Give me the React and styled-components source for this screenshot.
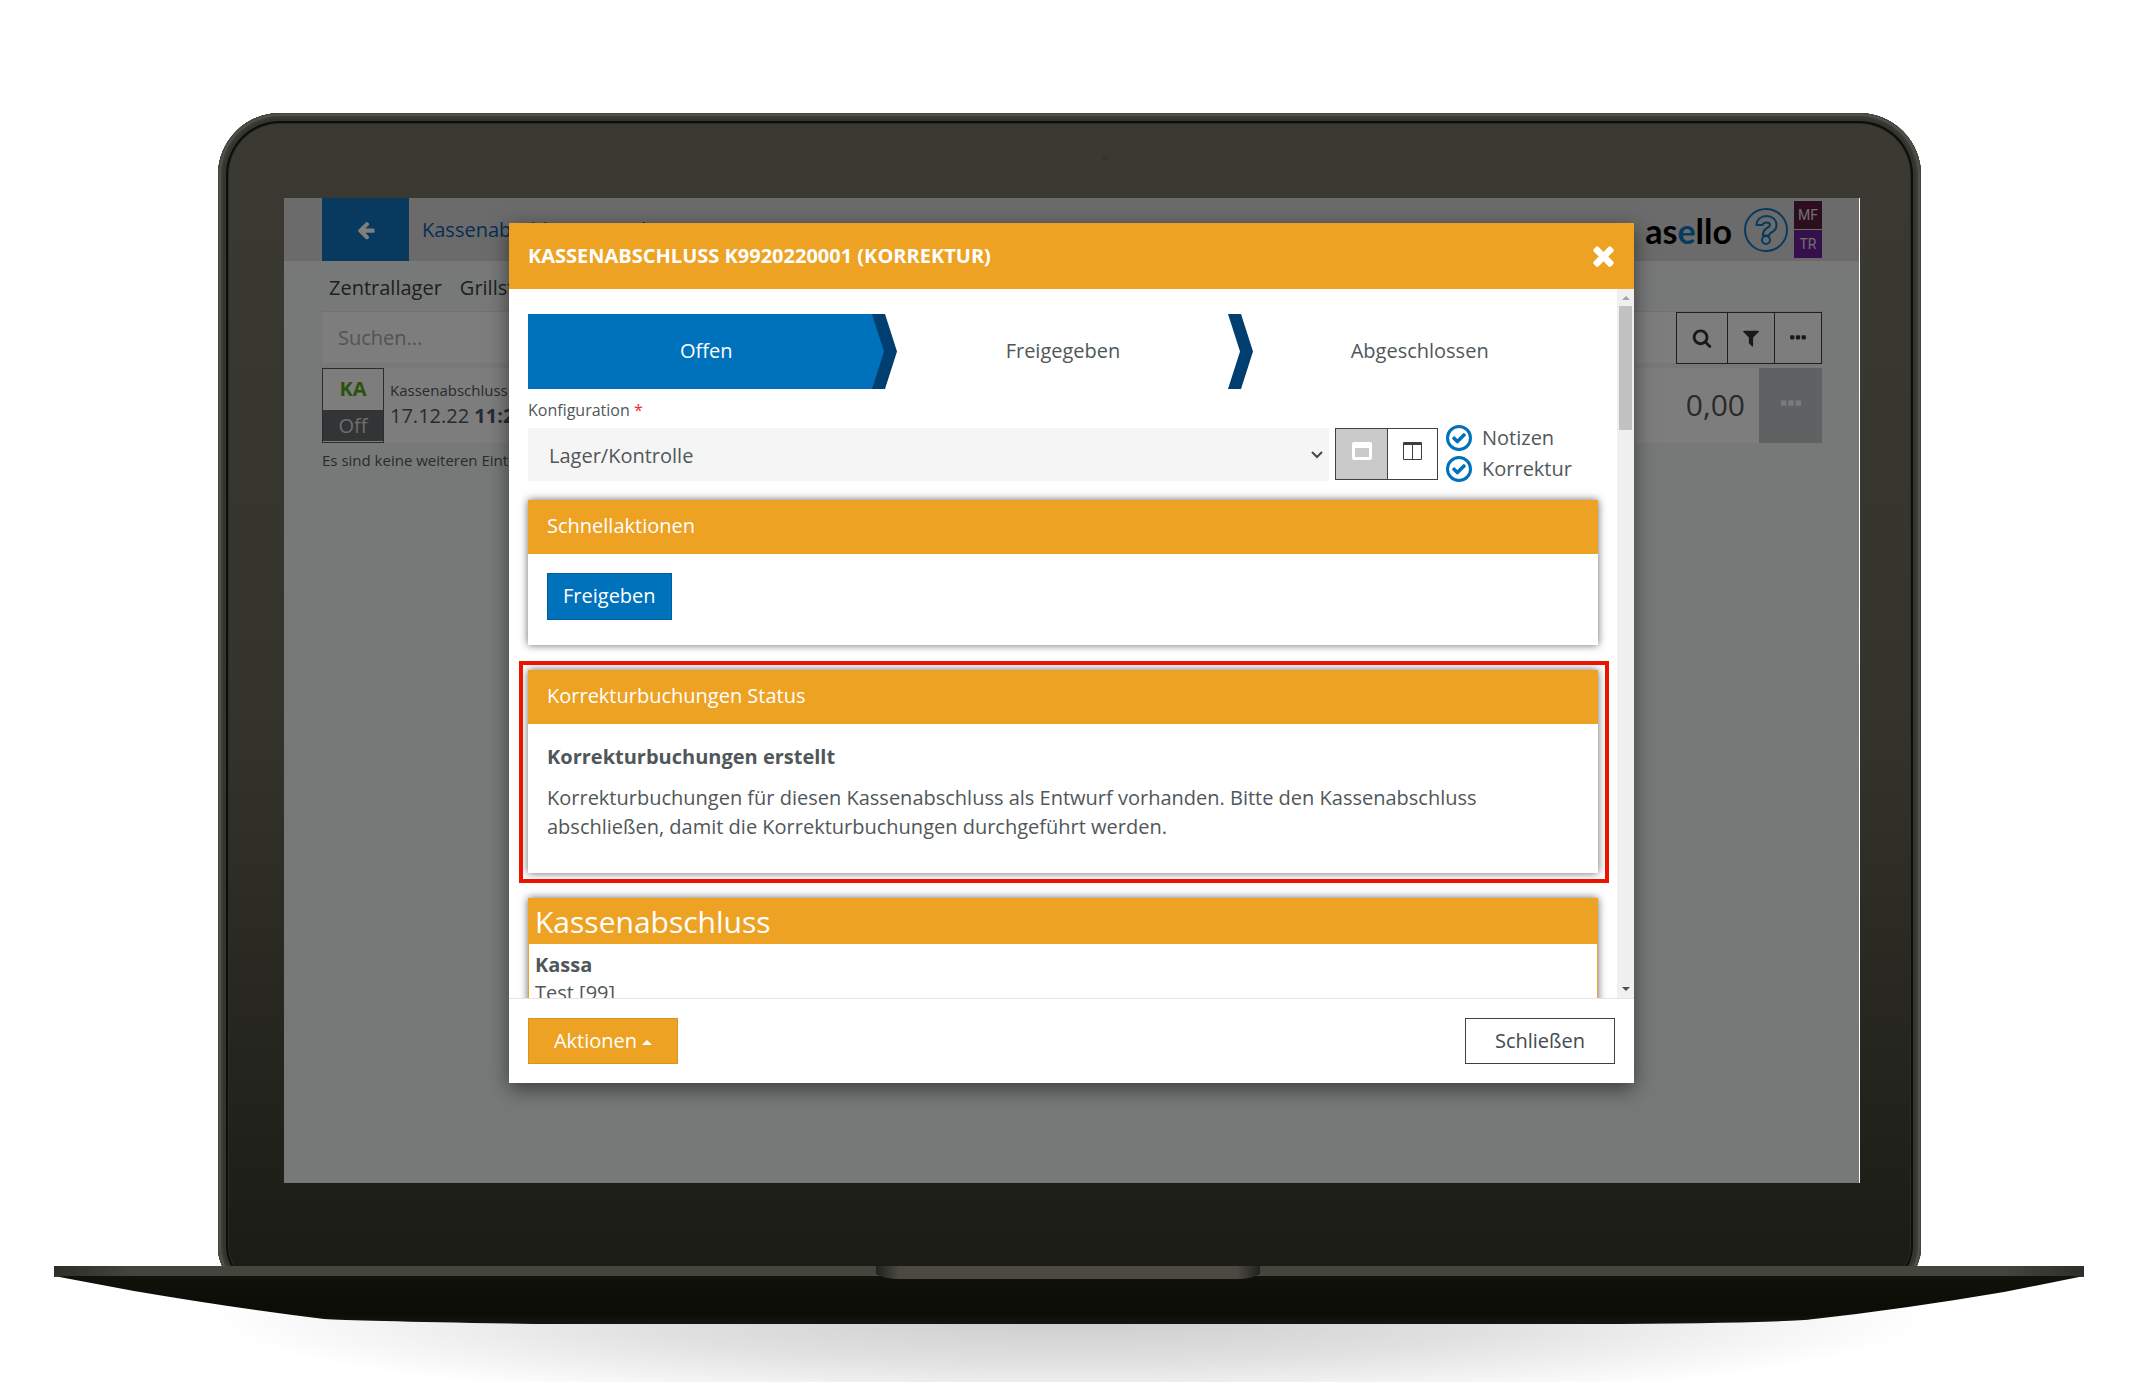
import React from 'react';
import styled, { createGlobalStyle, css } from 'styled-components';

const orange = '#eea224';
const blue = '#0072bc';
const text = '#50575a';

const GlobalStyle = createGlobalStyle`
  * {
    box-sizing: border-box;
  }
  body {
    margin: 0;
    background: #fff;
    color: ${text};
    font-family: 'Open Sans', sans-serif;
    font-size: 20px;
    line-height: 29px;
  }
  button,
  input,
  select {
    font: inherit;
    color: inherit;
    margin: 0;
    border-radius: 0;
  }
  button {
    cursor: pointer;
  }
`;

const Page = styled.div`
  padding-top: 113px;
  overflow: hidden;
`;

/* laptop */

const Lid = styled.div`
  position: relative;
  margin: 0 222px 0 218px;
  padding: 85px 61px 109px 66px;
  border-radius: 62px 62px 45px 45px;
  background: linear-gradient(#3b3a32, #35342c 50%, #1c1c17 97%);
  box-shadow: inset 0 0 0 1px #45463f, inset 0 0 0 3px #50514a,
    inset 0 0 0 5px #3c3d36, inset 0 0 0 8px #34352e, inset 0 0 0 10px #0c0c09,
    inset 0 0 0 11px #2c2c26;
`;

const Camera = styled.span`
  position: absolute;
  top: 42px;
  left: 50%;
  width: 6px;
  height: 6px;
  margin-left: 32px;
  border-radius: 50%;
  background: #36352e;
`;

const Base = styled.div`
  position: relative;
  margin: -26px 59px 0 54px;
  svg {
    display: block;
    width: 100%;
    height: 116px;
  }
`;

const Screen = styled.div`
  position: relative;
  min-height: 985px;
  border-right: 1px solid #fff;
  background: #eff2f0;
`;

/* app behind the dialog */

const TopBar = styled.header`
  display: flex;
  align-items: center;
  height: 63px;
  padding: 0 37px 0 38px;
  background: #d6d6d6;
`;

const BackButton = styled.button`
  display: flex;
  align-items: center;
  justify-content: center;
  width: 87px;
  height: 63px;
  border: 0;
  background: #1074be;
  color: #fff;
`;

const PageTitle = styled.a`
  flex: 1;
  padding-left: 13px;
  color: #0e5ba6;
  text-decoration: none;
`;

const Logo = styled.span`
  margin-right: 12px;
  padding-top: 2px;
  color: #000;
  font: 700 34px/40px Lato, sans-serif;
  em {
    color: #1074be;
    font-style: normal;
  }
`;

const HelpButton = styled.button`
  display: flex;
  margin-right: 6px;
  padding: 0;
  border: 0;
  background: none;
  color: #1074be;
`;

const Badges = styled.div`
  display: grid;
  gap: 1px;
`;

const Badge = styled.span`
  width: 28px;
  height: 28px;
  background: ${({ $color }) => $color};
  color: #e2dfe4;
  font: 14px/28px Roboto, sans-serif;
  text-align: center;
`;

const Content = styled.main`
  padding: 12px 37px 0 38px;
`;

const Tabs = styled.nav`
  display: flex;
  gap: 18px;
  height: 38px;
  padding: 0 7px;
  a {
    color: #3c3f41;
    text-decoration: none;
  }
`;

const SearchRow = styled.div`
  display: flex;
  height: 53px;
  border-top: 1px solid #dfe4e4;
`;

const SearchInput = styled.input`
  flex: 1;
  min-width: 0;
  height: 51px;
  padding: 0 16px;
  border: 0;
  background: #fbfbfb;
  &::placeholder {
    color: #a6a6a6;
    opacity: 1;
  }
`;

const ToolButton = styled.button`
  display: flex;
  align-items: center;
  justify-content: center;
  width: 48px;
  height: 52px;
  margin-left: -1px;
  padding: 0;
  border: 1px solid #3c3f41;
  background: #fbfbfb;
  color: #333;
  &:first-of-type {
    width: 52px;
  }
`;

const Entry = styled.article`
  display: flex;
  height: 75px;
  margin-top: 4px;
  background: #fbfbfb;
`;

const EntryType = styled.div`
  width: 62px;
  padding-bottom: 1px;
  border: 1px solid #55595c;
  text-align: center;
  strong {
    display: block;
    height: 41px;
    color: #55a51c;
    line-height: 39px;
  }
  span {
    display: block;
    background: #66686b;
    color: #dcdcdc;
    line-height: 31px;
  }
`;

const EntryInfo = styled.div`
  flex: 1;
  padding: 10px 6px;
  small {
    display: block;
    font-size: 15px;
    line-height: 24px;
  }
  div {
    line-height: 27px;
  }
`;

const Amount = styled.div`
  padding-right: 14px;
  font-size: 30px;
  line-height: 73px;
`;

const EntryMenu = styled.button`
  display: flex;
  align-items: center;
  justify-content: center;
  width: 63px;
  padding-bottom: 4px;
  border: 0;
  background: #bfc2c5;
  color: #f5f5f5;
`;

const ListEnd = styled.p`
  margin: 6px 0 0;
  font-size: 15px;
  line-height: 22px;
`;

/* dialog */

const Backdrop = styled.div`
  position: absolute;
  inset: 0;
  display: flex;
  align-items: flex-start;
  justify-content: center;
  padding-top: 25px;
  background: rgba(0, 0, 0, 0.5);
`;

const Dialog = styled.section`
  width: 100%;
  max-width: 1125px;
  background: #fff;
  box-shadow: 0 6px 19px rgba(0, 0, 0, 0.5);
`;

const DialogHeader = styled.header`
  display: flex;
  align-items: center;
  justify-content: space-between;
  height: 66px;
  padding: 0 15px 2px 19px;
  background: ${orange};
  color: #fff;
  h1 {
    margin: 0;
    font-size: 20px;
    line-height: 29px;
  }
  button {
    display: flex;
    padding: 0;
    border: 0;
    background: none;
  }
`;

const DialogBody = styled.div`
  display: flex;
  height: 709px;
  overflow: hidden;
`;

const DialogContent = styled.div`
  flex: 1;
  min-width: 0;
  padding: 25px 19px;
`;

const ScrollTrack = styled.div`
  display: flex;
  flex-direction: column;
  align-items: center;
  width: 17px;
  padding: 7px 0;
  background: #f0f0f0;
`;

const ScrollThumb = styled.div`
  width: 13px;
  height: 124px;
  margin: 6px 0 auto;
  background: #c1c1c1;
`;

const ScrollArrow = styled.span`
  width: 0;
  height: 0;
  border: 4px solid transparent;
  border-top-width: 0;
  border-bottom: 4px solid #a3a3a3;
  ${({ $down }) =>
    $down &&
    css`
      border-top: 4px solid #505050;
      border-bottom-width: 0;
    `}
`;

const Steps = styled.ol`
  display: grid;
  grid-template-columns: repeat(3, 1fr);
  margin: 0;
  padding: 0;
  list-style: none;
`;

const Step = styled.li`
  position: relative;
  height: 75px;
  line-height: 73px;
  text-align: center;
  ${({ $active }) =>
    $active &&
    css`
      background: ${blue};
      color: #fff;
    `}
  svg {
    position: absolute;
    top: 0;
    right: -12px;
    z-index: 1;
  }
`;

const FieldLabel = styled.label`
  display: block;
  margin-top: 8px;
  font-size: 16px;
  line-height: 26px;
  span {
    color: #f0282d;
  }
`;

const ConfigRow = styled.div`
  display: flex;
  margin-top: 5px;
  height: 53px;
`;

const SelectBox = styled.div`
  position: relative;
  flex: 1;
  select {
    width: 100%;
    height: 53px;
    padding: 2px 21px 0;
    border: 0;
    background: #f5f5f5;
    appearance: none;
  }
  svg {
    position: absolute;
    top: 22px;
    right: 6px;
    pointer-events: none;
  }
`;

const ViewSwitch = styled.div`
  display: flex;
  height: 52px;
  margin: 0 8px 0 6px;
  border: 1px solid #3f4346;
`;

const ViewButton = styled.button`
  display: flex;
  justify-content: center;
  width: 50px;
  padding: 13px 0 0;
  border: 0;
  background: ${({ $active }) => ($active ? '#cacaca' : '#fff')};
  color: ${({ $active }) => ($active ? '#fff' : '#3c3f41')};
  & + & {
    border-left: 1px solid #3f4346;
  }
  &:first-child {
    width: 51px;
  }
`;

const Checks = styled.div`
  display: grid;
  align-content: start;
  width: 152px;
  margin-top: -6px;
`;

const Check = styled.label`
  display: flex;
  align-items: center;
  gap: 10px;
  height: 31px;
  span {
    position: relative;
    display: flex;
  }
  input {
    width: 26px;
    height: 26px;
    border: 3px solid ${blue};
    border-radius: 50%;
    appearance: none;
  }
  svg {
    position: absolute;
    top: 5px;
    left: 5px;
    color: ${blue};
  }
`;

const Card = styled.section`
  position: relative;
  margin-top: ${({ $first }) => ($first ? '19px' : '25px')};
  box-shadow: 0 0 8px rgba(0, 0, 0, 0.6);
  ${({ $marked }) =>
    $marked &&
    css`
      &::after {
        content: '';
        position: absolute;
        inset: -9px -11px -10px -9px;
        border: 4px solid #ea1400;
      }
    `}
`;

const CardTitle = styled.h2`
  margin: 0;
  padding: 11px 19px 14px;
  background: ${orange};
  color: #fff;
  font-size: 20px;
  font-weight: 400;
  line-height: 29px;
`;

const CardBody = styled.div`
  padding: 18px 19px 25px;
  h3 {
    margin: 0 0 12px;
    font-size: 20px;
    line-height: 29px;
  }
  p {
    margin: 0;
    padding-bottom: 7px;
  }
`;

const PrimaryButton = styled.button`
  display: block;
  height: 47px;
  margin-top: 1px;
  padding: 0 15px 2px;
  border: 1px solid #005f9e;
  background: ${blue};
  color: #fff;
`;

const Report = styled(Card)`
  border: 1px solid ${orange};
  h2 {
    margin: 0;
    padding: 0 6px;
    background: ${orange};
    color: #fff;
    font-size: 30px;
    font-weight: 400;
    line-height: 45px;
  }
  dl {
    margin: 0;
    padding: 7px 6px 40px;
    line-height: 28px;
  }
  dt {
    font-weight: 700;
  }
  dd {
    margin: 0;
  }
`;

const DialogFooter = styled.footer`
  display: flex;
  justify-content: space-between;
  padding: 19px;
  border-top: 1px solid #e5e5e5;
`;

const FooterButton = styled.button`
  display: flex;
  align-items: center;
  justify-content: center;
  gap: 5px;
  width: 150px;
  height: 46px;
  padding: 0 0 2px;
  border: 1px solid ${({ $primary }) => ($primary ? '#d99220' : '#3f4346')};
  background: ${({ $primary }) => ($primary ? orange : '#fff')};
  color: ${({ $primary }) => ($primary ? '#fff' : '#434a4e')};
  svg {
    margin-top: 5px;
  }
`;

const paths = {
  arrow:
    'M1664 896v128q0 53-32.5 90.5t-84.5 37.5h-704l293 294q38 36 38 90t-38 90l-75 76q-37 37-90 37-52 0-91-37l-651-652q-37-37-37-90 0-52 37-91l651-650q38-38 91-38 52 0 90 38l75 74q38 38 38 91t-38 91l-293 293h704q52 0 84.5 37.5t32.5 90.5z',
  search:
    'M1216 832q0-185-131.5-316.5t-316.5-131.5-316.5 131.5-131.5 316.5 131.5 316.5 316.5 131.5 316.5-131.5 131.5-316.5zm512 832q0 52-38 90t-90 38q-54 0-90-38l-343-342q-179 124-399 124-143 0-273.5-55.5t-225-150-150-225-55.5-273.5 55.5-273.5 150-225 225-150 273.5-55.5 273.5 55.5 225 150 150 225 55.5 273.5q0 220-124 399l343 343q37 37 37 90z',
  filter:
    'M1595 295q17 41-14 70l-493 493v742q0 42-39 59-13 5-25 5-27 0-45-19l-256-256q-19-19-19-45v-486l-493-493q-31-29-14-70 17-39 59-39h1280q42 0 59 39z',
  dots:
    'M576 736v192q0 40-28 68t-68 28h-192q-40 0-68-28t-28-68v-192q0-40 28-68t68-28h192q40 0 68 28t28 68zm512 0v192q0 40-28 68t-68 28h-192q-40 0-68-28t-28-68v-192q0-40 28-68t68-28h192q40 0 68 28t28 68zm512 0v192q0 40-28 68t-68 28h-192q-40 0-68-28t-28-68v-192q0-40 28-68t68-28h192q40 0 68 28t28 68z',
  close:
    'M1490 1322q0 40-28 68l-136 136q-28 28-68 28t-68-28l-294-294-294 294q-28 28-68 28t-68-28l-136-136q-28-28-28-68t28-68l294-294-294-294q-28-28-28-68t28-68l136-136q28-28 68-28t68 28l294 294 294-294q28-28 68-28t68 28l136 136q28 28 28 68t-28 68l-294 294 294 294q28 28 28 68z',
  check:
    'M1671 566q0 40-28 68l-724 724-136 136q-28 28-68 28t-68-28l-136-136-362-362q-28-28-28-68t28-68l136-136q28-28 68-28t68 28l294 295 656-657q28-28 68-28t68 28l136 136q28 28 28 68z',
};

const Icon = ({ name, size = 20 }) => (
  <svg width={size} height={size} viewBox="0 0 1792 1792" fill="currentColor" aria-hidden="true">
    <path d={paths[name]} />
  </svg>
);

const StepArrow = () => (
  <svg width="25" height="75" viewBox="0 0 25 75" aria-hidden="true">
    <path d="M0 0h13l12 37.500-12 37.500H0l12-37.500z" fill="#003f70" />
  </svg>
);

const HelpIcon = () => (
  <svg width="44" height="44" viewBox="0 0 44 44" fill="none" stroke="currentColor" strokeWidth="2" aria-hidden="true">
    <circle cx="22" cy="22" r="21" />
    <path d="M12.500 17c0-5 4-9 10-9s10 4 10 9c0 4-2 6-5 7.500-2 1-2.500 1.500-2.500 3h-6c0-4 1-6 4-7.500 2-1 3-1.500 3-3s-1.500-2.500-3.500-2.500-3.500 1-4 2.500z" />
    <circle cx="22" cy="32" r="4" />
  </svg>
);

const WindowIcon = () => (
  <svg width="20" height="18" viewBox="0 0 20 18" aria-hidden="true">
    <path d="M2 0h16a2 2 0 0 1 2 2v14a2 2 0 0 1-2 2H2a2 2 0 0 1-2-2V2a2 2 0 0 1 2-2zm1 6v9h14V6z" fill="currentColor" fillRule="evenodd" />
  </svg>
);

const ColumnsIcon = () => (
  <svg width="19" height="18" viewBox="0 0 19 18" aria-hidden="true">
    <path d="M1 0h17a1 1 0 0 1 1 1v16a1 1 0 0 1-1 1H1a1 1 0 0 1-1-1V1a1 1 0 0 1 1-1zm0 3v14h8V3zm9 0v14h8V3z" fill="currentColor" fillRule="evenodd" />
  </svg>
);

const Checkbox = ({ label }) => (
  <Check>
    <span>
      <input type="checkbox" defaultChecked />
      <Icon name="check" size={16} />
    </span>
    {label}
  </Check>
);

const LaptopBase = () => (
  <Base>
    <svg viewBox="0 0 2030 116" preserveAspectRatio="none" aria-hidden="true">
      <defs>
        <radialGradient id="floor">
          <stop offset="0" stopColor="#000" stopOpacity="0.2" />
          <stop offset="0.5" stopColor="#000" stopOpacity="0.12" />
          <stop offset="1" stopColor="#000" stopOpacity="0" />
        </radialGradient>
        <linearGradient id="hull" x2="0" y2="1">
          <stop offset="0" stopColor="#11120a" />
          <stop offset="0.75" stopColor="#0b0c06" />
          <stop offset="1" stopColor="#161412" />
        </linearGradient>
        <linearGradient id="edge">
          <stop offset="0" stopColor="#2e2e28" />
          <stop offset="0.04" stopColor="#45453e" />
          <stop offset="0.96" stopColor="#45453e" />
          <stop offset="1" stopColor="#2e2e28" />
        </linearGradient>
        <linearGradient id="notch">
          <stop offset="0" stopColor="#22221d" />
          <stop offset="0.06" stopColor="#4a4942" />
          <stop offset="0.94" stopColor="#4a4942" />
          <stop offset="1" stopColor="#22221d" />
        </linearGradient>
      </defs>
      <ellipse cx="1015" cy="52" rx="860" ry="90" fill="url(#floor)" />
      <path d="M0 10L80 25Q180 42 270 53Q300 55 480 58H1550Q1730 57 1760 53Q1850 43 1950 26L2030 10z" fill="url(#hull)" />
      <path d="M0 0h2030v11l-12-1H12L0 11z" fill="url(#edge)" />
      <path d="M822 0h384v8q-8 5-24 5H846q-16 0-24-5z" fill="url(#notch)" />
    </svg>
  </Base>
);

const App = () => (
  <Page>
    <GlobalStyle />
    <Lid>
      <Camera />
      <Screen>
        <TopBar>
          <BackButton aria-label="Zurück">
            <Icon name="arrow" />
          </BackButton>
          <PageTitle href="#">Kassenabschluss Freigabe</PageTitle>
          <Logo>
            as<em>e</em>llo
          </Logo>
          <HelpButton aria-label="Hilfe">
            <HelpIcon />
          </HelpButton>
          <Badges>
            <Badge $color="#581e38">MF</Badge>
            <Badge $color="#6c2094">TR</Badge>
          </Badges>
        </TopBar>
        <Content>
          <Tabs>
            <a href="#">Zentrallager</a>
            <a href="#">Grillstand</a>
          </Tabs>
          <SearchRow>
            <SearchInput type="text" placeholder="Suchen..." aria-label="Suchen" />
            <ToolButton aria-label="Suchen">
              <Icon name="search" />
            </ToolButton>
            <ToolButton aria-label="Filter">
              <Icon name="filter" />
            </ToolButton>
            <ToolButton aria-label="Mehr">
              <Icon name="dots" />
            </ToolButton>
          </SearchRow>
          <Entry>
            <EntryType>
              <strong>KA</strong>
              <span>Off</span>
            </EntryType>
            <EntryInfo>
              <small>Kassenabschluss</small>
              <div>
                17.12.22 <b>11:2</b>
              </div>
            </EntryInfo>
            <Amount>0,00</Amount>
            <EntryMenu aria-label="Aktionen">
              <Icon name="dots" size={26} />
            </EntryMenu>
          </Entry>
          <ListEnd>Es sind keine weiteren Einträge</ListEnd>
        </Content>
        <Backdrop>
          <Dialog role="dialog" aria-labelledby="dialog-title">
            <DialogHeader>
              <h1 id="dialog-title">KASSENABSCHLUSS K9920220001 (KORREKTUR)</h1>
              <button aria-label="Schließen">
                <Icon name="close" size={31} />
              </button>
            </DialogHeader>
            <DialogBody>
              <DialogContent>
                <Steps>
                  <Step $active>
                    Offen
                    <StepArrow />
                  </Step>
                  <Step>
                    Freigegeben
                    <StepArrow />
                  </Step>
                  <Step>Abgeschlossen</Step>
                </Steps>
                <FieldLabel htmlFor="config">
                  Konfiguration <span>*</span>
                </FieldLabel>
                <ConfigRow>
                  <SelectBox>
                    <select id="config">
                      <option>Lager/Kontrolle</option>
                    </select>
                    <svg width="12" height="10" viewBox="0 0 12 10" fill="none" stroke="#43484b" strokeWidth="2" aria-hidden="true">
                      <path d="M1 2l5 5 5-5" />
                    </svg>
                  </SelectBox>
                  <ViewSwitch>
                    <ViewButton $active aria-label="Einspaltig">
                      <WindowIcon />
                    </ViewButton>
                    <ViewButton aria-label="Zweispaltig">
                      <ColumnsIcon />
                    </ViewButton>
                  </ViewSwitch>
                  <Checks>
                    <Checkbox label="Notizen" />
                    <Checkbox label="Korrektur" />
                  </Checks>
                </ConfigRow>
                <Card $first>
                  <CardTitle>Schnellaktionen</CardTitle>
                  <CardBody>
                    <PrimaryButton>Freigeben</PrimaryButton>
                  </CardBody>
                </Card>
                <Card $marked>
                  <CardTitle>Korrekturbuchungen Status</CardTitle>
                  <CardBody>
                    <h3>Korrekturbuchungen erstellt</h3>
                    <p>
                      Korrekturbuchungen für diesen Kassenabschluss als Entwurf vorhanden. Bitte den
                      Kassenabschluss abschließen, damit die Korrekturbuchungen durchgeführt werden.
                    </p>
                  </CardBody>
                </Card>
                <Report>
                  <h2>Kassenabschluss</h2>
                  <dl>
                    <dt>Kassa</dt>
                    <dd>Test [99]</dd>
                  </dl>
                </Report>
              </DialogContent>
              <ScrollTrack>
                <ScrollArrow />
                <ScrollThumb />
                <ScrollArrow $down />
              </ScrollTrack>
            </DialogBody>
            <DialogFooter>
              <FooterButton $primary>
                Aktionen
                <svg width="10" height="5" viewBox="0 0 10 5" fill="currentColor" aria-hidden="true">
                  <path d="M0 5l5-5 5 5z" />
                </svg>
              </FooterButton>
              <FooterButton>Schließen</FooterButton>
            </DialogFooter>
          </Dialog>
        </Backdrop>
      </Screen>
    </Lid>
    <LaptopBase />
  </Page>
);

export default App;
